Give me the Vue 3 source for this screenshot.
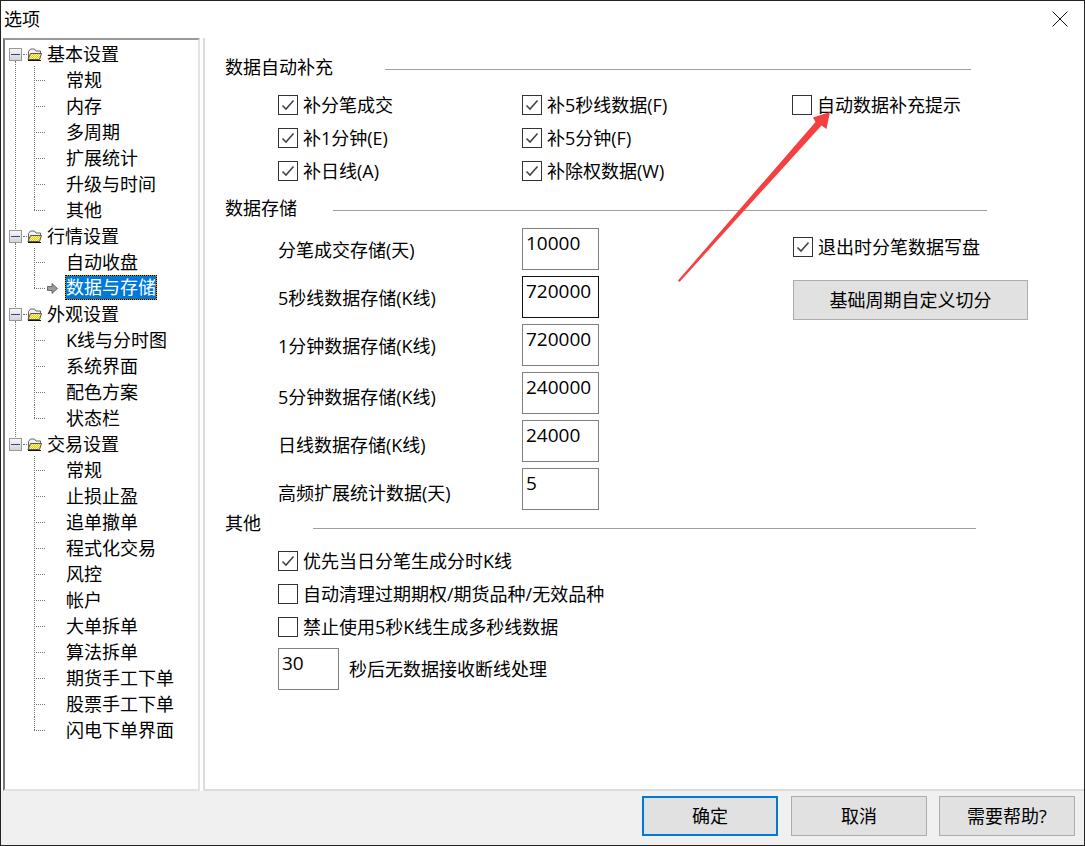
<script setup>
const tree = [
  { name: '基本设置', kids: ['常规', '内存', '多周期', '扩展统计', '升级与时间', '其他'] },
  { name: '行情设置', kids: ['自动收盘', '数据与存储'] },
  { name: '外观设置', kids: ['K线与分时图', '系统界面', '配色方案', '状态栏'] },
  { name: '交易设置', kids: ['常规', '止损止盈', '追单撤单', '程式化交易', '风控', '帐户', '大单拆单', '算法拆单', '期货手工下单', '股票手工下单', '闪电下单界面'] },
]
const fillChecks = [
  { label: '补分笔成交', on: true },
  { label: '补5秒线数据(F)', on: true },
  { label: '自动数据补充提示', on: false },
  { label: '补1分钟(E)', on: true },
  { label: '补5分钟(F)', on: true },
  null,
  { label: '补日线(A)', on: true },
  { label: '补除权数据(W)', on: true },
]
const stores = [
  { label: '分笔成交存储(天)', value: '10000' },
  { label: '5秒线数据存储(K线)', value: '720000', focus: true },
  { label: '1分钟数据存储(K线)', value: '720000' },
  { label: '5分钟数据存储(K线)', value: '240000', low: true },
  { label: '日线数据存储(K线)', value: '24000', low: true },
  { label: '高频扩展统计数据(天)', value: '5', low: true },
]
const others = [
  { label: '优先当日分笔生成分时K线', on: true },
  { label: '自动清理过期期权/期货品种/无效品种', on: false },
  { label: '禁止使用5秒K线生成多秒线数据', on: false },
]
</script>

<template>
  <div class="window">
    <header class="titlebar">
      <span class="title">选项</span>
      <svg class="close" width="16" height="16" viewBox="0 0 16 16"><path d="M.5.5l15 15M15.500.5l-15 15" stroke="#111" fill="none" /></svg>
    </header>

    <div class="main">
      <nav class="tree">
        <div v-for="g in tree" :key="g.name" class="group">
          <div class="root">
            <span class="toggle"><i></i></span>
            <span class="stub"></span>
            <svg class="folder" width="15" height="13" viewBox="0 0 15 13">
              <defs>
                <pattern id="dither" width="2" height="2" patternUnits="userSpaceOnUse">
                  <rect width="2" height="2" fill="#fff8a0" />
                  <rect width="1" height="1" fill="#e8c800" />
                  <rect x="1" y="1" width="1" height="1" fill="#e8c800" />
                </pattern>
              </defs>
              <path d="M1.500 10V3.500L3.500 1H7.500L9 3H13.500V6" fill="#f2f2f2" stroke="#666" />
              <path d="M1 11.500L3.500 5.500H14.500L12.500 11.500Z" fill="url(#dither)" stroke="#555" />
              <path d="M1 12.500H14" stroke="#111" />
            </svg>
            <span>{{ g.name }}</span>
          </div>
          <div v-for="k in g.kids" :key="k" class="kid">
            <svg v-if="k === '数据与存储'" class="pointer" width="11" height="11" viewBox="0 0 11 11">
              <path d="M0.500 3.500H5V0.500L10.500 5.500L5 10.500V7.500H0.500Z" fill="#9a9a9a" stroke="#444" stroke-width=".7" />
            </svg>
            <span :class="{ selected: k === '数据与存储' }">{{ k }}</span>
          </div>
        </div>
      </nav>

      <section class="content">
        <div class="heading h1"><span>数据自动补充</span><i></i></div>
        <div class="checks">
          <template v-for="(c, i) in fillChecks" :key="i">
            <label v-if="c" class="check">
              <span class="box">
                <svg v-if="c.on" width="18" height="18" viewBox="0 0 18 18"><path d="M3.500 9.500L7 13L14.500 4.500" fill="none" stroke="#444" stroke-width="1.600" /></svg>
              </span>{{ c.label }}
            </label>
            <span v-else></span>
          </template>
        </div>

        <div class="heading h2"><span>数据存储</span><i></i></div>
        <div class="store">
          <div class="fields">
            <div v-for="s in stores" :key="s.label" class="field">
              <span class="field-label" :class="{ low: s.low }">{{ s.label }}</span>
              <span class="input" :class="{ focus: s.focus }">{{ s.value }}</span>
            </div>
          </div>
          <div class="side">
            <label class="check">
              <span class="box"><svg width="18" height="18" viewBox="0 0 18 18"><path d="M3.500 9.500L7 13L14.500 4.500" fill="none" stroke="#444" stroke-width="1.600" /></svg></span>退出时分笔数据写盘
            </label>
            <button class="btn wide">基础周期自定义切分</button>
          </div>
        </div>

        <div class="heading h3"><span>其他</span><i></i></div>
        <div class="others">
          <label v-for="o in others" :key="o.label" class="check">
            <span class="box">
              <svg v-if="o.on" width="18" height="18" viewBox="0 0 18 18"><path d="M3.500 9.500L7 13L14.500 4.500" fill="none" stroke="#444" stroke-width="1.600" /></svg>
            </span>{{ o.label }}
          </label>
          <div class="timeout">
            <span class="input short">30</span>
            <span>秒后无数据接收断线处理</span>
          </div>
        </div>
      </section>
    </div>

    <footer class="footer">
      <button class="btn primary">确定</button>
      <button class="btn">取消</button>
      <button class="btn">需要帮助?</button>
    </footer>

    <svg class="arrow" width="1085" height="846" viewBox="0 0 1085 846">
      <path d="M678 280.500L679.500 282L821.500 125.500L826.500 129L830 112L813 117.500L815.500 122Z" fill="#f44040" />
    </svg>
  </div>
</template>

<style>
html, body { margin: 0; background: #fff; }
</style>

<style scoped>
.window {
  position: relative;
  box-sizing: border-box;
  width: 1085px;
  height: 846px;
  border: 1px solid #222;
  background: #fff;
  display: flex;
  flex-direction: column;
  font-family: "Open Sans", "Noto Sans CJK SC", sans-serif;
  font-size: 18px;
  line-height: 26px;
  color: #000;
  overflow: hidden;
}
.titlebar {
  height: 37px;
  flex: none;
  box-sizing: border-box;
  display: flex;
  align-items: center;
  justify-content: space-between;
  padding: 0 16px 2px 3px;
}
.main { flex: 1; display: flex; min-height: 0; padding-left: 2px; }
.tree {
  width: 197px;
  flex: none;
  box-sizing: border-box;
  border: 2px solid #e3e3e3;
  border-left-color: #777;
  border-top-color: #999;
  padding-top: 1px;
  margin-right: 3px;
}
.group { position: relative; }
.group:not(:last-child)::before {
  content: "";
  position: absolute;
  left: 10px;
  top: 20px;
  bottom: -8px;
  border-left: 1px dotted #777;
}
.root, .kid { height: 26px; display: flex; align-items: center; white-space: nowrap; position: relative; }
.root { padding-left: 4px; }
.toggle {
  box-sizing: border-box;
  width: 13px;
  height: 13px;
  border: 1px solid #999;
  background: linear-gradient(#f6f6f6, #d4d4d4);
  display: flex;
  align-items: center;
  justify-content: center;
  position: relative;
  z-index: 1;
}
.toggle i { width: 9px; height: 1px; background: #2a4a8a; }
.stub { width: 4px; border-top: 1px dotted #777; margin-left: 1px; }
.folder { margin: 0 5px 0 0; }
.kid { padding-left: 61px; }
.kid::before {
  content: "";
  position: absolute;
  left: 29px;
  top: -1px;
  height: 14px;
  border-left: 1px dotted #777;
}
.kid:not(:last-child)::before { height: 27px; }
.kid::after {
  content: "";
  position: absolute;
  left: 29px;
  top: 13px;
  width: 11px;
  border-top: 1px dotted #777;
}
.pointer { position: absolute; left: 42px; top: 8px; z-index: 1; }
.selected {
  box-sizing: border-box;
  display: block;
  margin: -1px 0 0 -1px;
  height: 25px;
  line-height: 23px;
  border: 1px solid transparent;
  padding: 0;
  background: linear-gradient(#0078d7, #0078d7) padding-box, #f08000 border-box;
  color: #fff;
  outline: 1px dotted #000;
  outline-offset: -1px;
}
.content {
  flex: 1;
  box-sizing: border-box;
  border: solid #dcdcdc;
  border-width: 0 0 2px 2px;
  padding: 16px 0 0 20px;
  min-width: 0;
}
.heading { display: flex; align-items: center; height: 26px; }
.heading i { height: 1px; background: #a0a0a0; display: block; position: relative; top: 2px; }
.h1 i { margin-left: 52px; width: 586px; }
.h2 { margin-top: 8px; }
.h2 i { margin-left: 36px; width: 654px; }
.h3 { margin-top: -6px; }
.h3 i { margin-left: 52px; width: 663px; top: 5px; }
.checks {
  display: grid;
  grid-template-columns: 244px 270px auto;
  grid-auto-rows: 33px;
  margin: 8px 0 0 53px;
}
.check { display: flex; align-items: center; white-space: nowrap; height: 33px; }
.box {
  box-sizing: border-box;
  width: 20px;
  height: 20px;
  border: 1px solid #333;
  background: #fff;
  margin-right: 5px;
  display: block;
  flex: none;
}
.box svg { display: block; }
.store { display: flex; margin: 7px 0 0 53px; }
.fields { width: 515px; }
.field { display: flex; height: 48px; }
.field-label { width: 244px; padding-top: 9px; }
.field-label.low { padding-top: 12px; }
.input {
  box-sizing: border-box;
  display: block;
  width: 77px;
  height: 42px;
  border: 1px solid #808080;
  padding: 0 3px;
  font-size: 19px;
  line-height: 28px;
  background: #fff;
}
.input.focus { border-color: #111; }
.input.short { width: 61px; }
.side { display: flex; flex-direction: column; padding-top: 2px; }
.btn {
  box-sizing: border-box;
  width: 136px;
  height: 40px;
  border: 1px solid #adadad;
  background: #e1e1e1;
  font: inherit;
  color: #000;
  padding: 0;
}
.btn.wide { width: 235px; margin-top: 17px; }
.btn.primary { border: 2px solid #0078d7; margin-right: 1px; }
.others { margin: 8px 0 0 53px; }
.timeout { display: flex; align-items: center; margin-top: 5px; gap: 10px; }
.footer {
  flex: none;
  height: 54px;
  box-sizing: border-box;
  background: #f0f0f0;
  display: flex;
  padding: 5px 9px 0 0;
  justify-content: flex-end;
  gap: 12px;
}
.arrow { position: absolute; left: -1px; top: -1px; pointer-events: none; }
</style>
